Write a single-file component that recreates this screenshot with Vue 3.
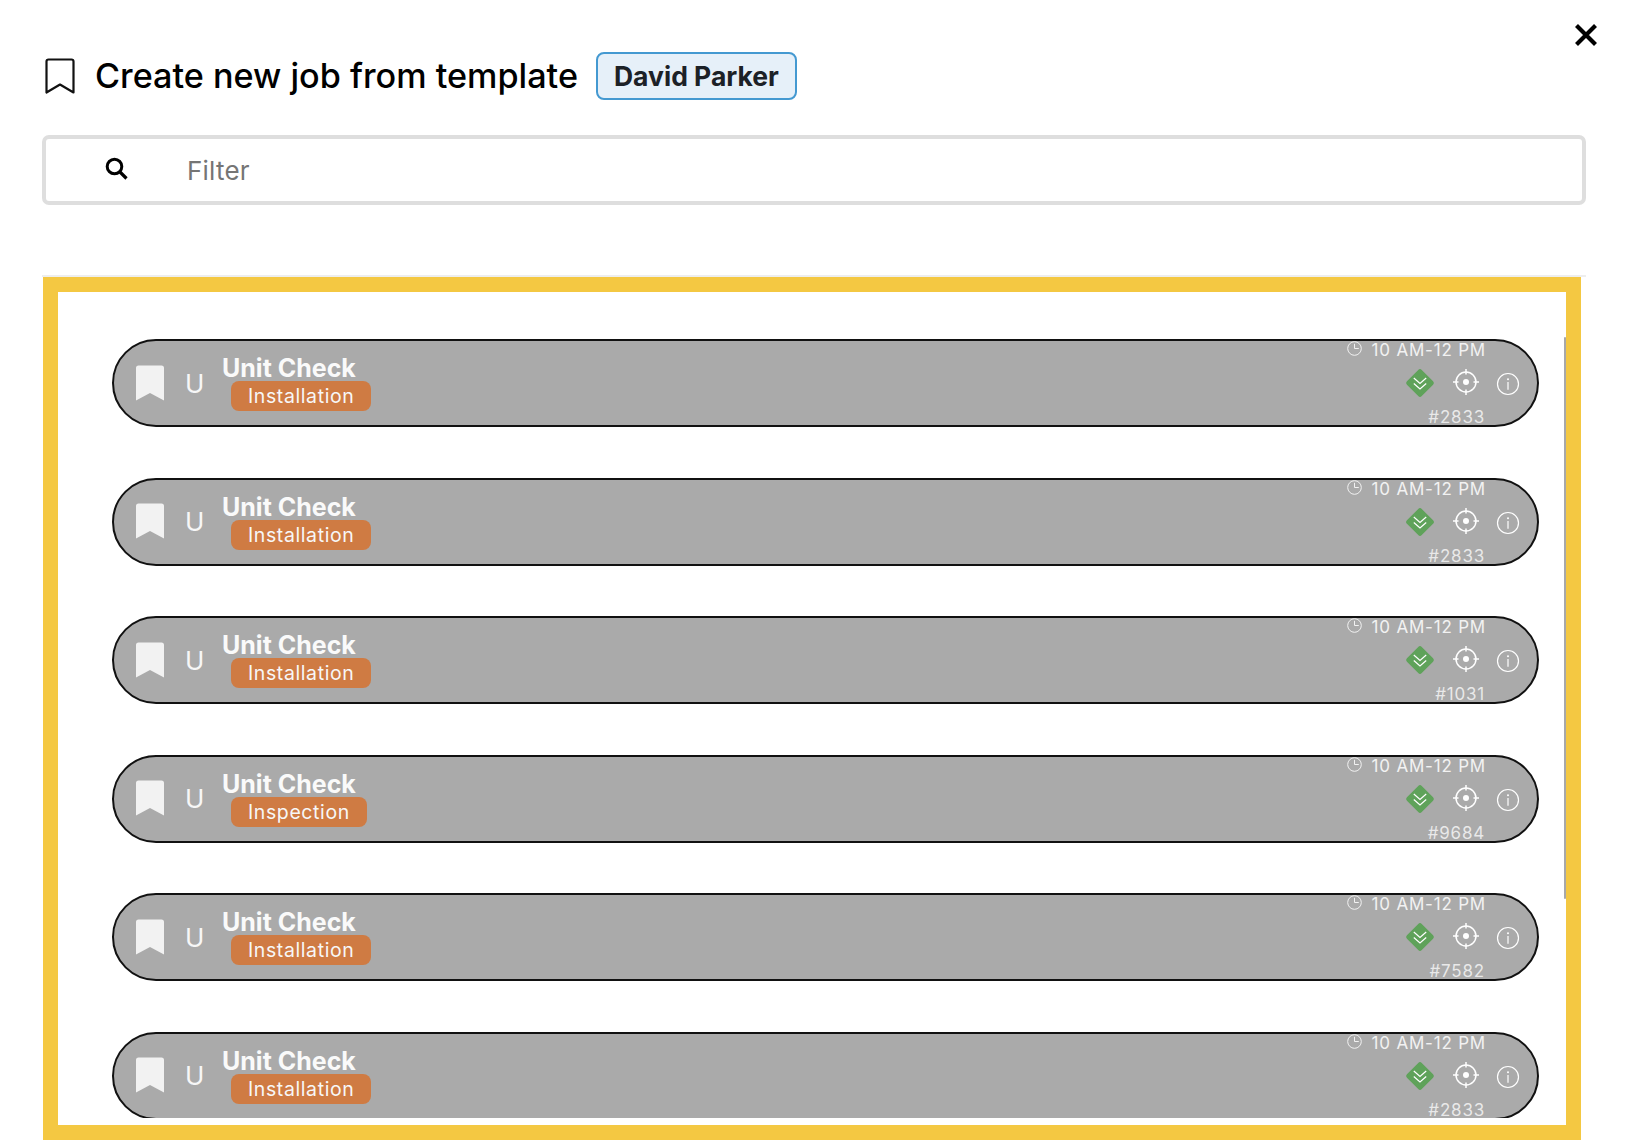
<script setup>
const jobs = [
  { id: 1, type: 'Installation', num: '#2833' },
  { id: 2, type: 'Installation', num: '#2833' },
  { id: 3, type: 'Installation', num: '#1031' },
  { id: 4, type: 'Inspection', num: '#9684' },
  { id: 5, type: 'Installation', num: '#7582' },
  { id: 6, type: 'Installation', num: '#2833' }
]
</script>

<template>
  <div class="page">
    <button class="close" aria-label="Close">
      <svg width="24" height="24" viewBox="0 0 24 24"><path d="M2.500 2.500 21.500 21.500M21.500 2.500 2.500 21.500" stroke="#000" stroke-width="4.200" fill="none" /></svg>
    </button>

    <header class="head">
      <svg class="mark" width="30" height="36" viewBox="0 0 30 36"><path d="M1.500 34.500V3.500Q1.500 1.500 3.500 1.500H26.500Q28.500 1.500 28.500 3.500V34.500L15 26.500Z" fill="none" stroke="#111" stroke-width="2.200" stroke-linejoin="round" /></svg>
      <h1 class="title">Create new job from template</h1>
      <span class="person">David Parker</span>
    </header>

    <div class="search">
      <svg class="glass" width="23" height="23" viewBox="0 0 23 23"><circle cx="9.500" cy="9.500" r="7.300" fill="none" stroke="#000" stroke-width="3" /><path d="M14.500 14.500 21.500 21.500" stroke="#000" stroke-width="3.200" fill="none" /></svg>
      <span class="placeholder">Filter</span>
    </div>

    <div class="rule"></div>

    <section class="panel">
      <div class="thumb"></div>
      <div class="list">
        <article v-for="job in jobs" :key="job.id" class="job">
          <svg class="flag" width="30" height="36" viewBox="0 0 30 36"><path d="M1 35.500V3Q1 .5 3.500 .5H26.500Q29 .5 29 3V35.500L15 28Z" fill="#f2f2f2" /></svg>
          <span class="letter">U</span>
          <div class="info">
            <div class="name">Unit Check</div>
            <span class="tag">{{ job.type }}</span>
          </div>
          <div class="meta">
            <div class="time">
              <svg width="15" height="15" viewBox="0 0 15 15"><circle cx="7.500" cy="7.500" r="6.800" fill="none" stroke="#f2f2f2" stroke-width="1" /><path d="M7.500 2.800V7.500H11.800" fill="none" stroke="#f2f2f2" stroke-width="1" /></svg>
              <span>10 AM-12 PM</span>
            </div>
            <div class="icons">
              <svg width="30" height="30" viewBox="0 0 30 30">
                <rect x="4.500" y="4.500" width="21" height="21" rx="2.500" transform="rotate(45 15 15)" fill="#5fa25a" />
                <path d="M8.800 10 15 15.500 21.200 10M8.800 15.500 15 21 21.200 15.500" fill="none" stroke="#fff" stroke-width="1.200" />
              </svg>
              <svg width="30" height="30" viewBox="0 0 30 30">
                <circle cx="15" cy="14" r="10" fill="none" stroke="#fff" stroke-width="1.500" />
                <circle cx="15" cy="14" r="3" fill="#fff" />
                <path d="M15 1V6.500M15 21.500V27M2 14H7.500M22.500 14H28" stroke="#fff" stroke-width="1.500" fill="none" />
              </svg>
              <svg width="30" height="30" viewBox="0 0 30 30">
                <circle cx="15" cy="16" r="10.500" fill="none" stroke="#fff" stroke-width="1.200" />
                <circle cx="15" cy="11.200" r="1" fill="#fff" />
                <path d="M15 14V21.800" stroke="#fff" stroke-width="1.200" fill="none" />
              </svg>
            </div>
            <div class="num">{{ job.num }}</div>
          </div>
        </article>
      </div>
      <div class="fold"></div>
    </section>
  </div>
</template>

<style scoped>
.page {
  position: relative;
  box-sizing: border-box;
  width: 1626px;
  height: 1146px;
  padding: 52px 40px 0 42px;
  overflow: hidden;
  background: #fff;
  font-family: Inter, "Liberation Sans", sans-serif;
}
.close {
  position: absolute;
  top: 23px;
  left: 1574px;
  width: 24px;
  height: 24px;
  padding: 0;
  border: 0;
  background: none;
}
.close svg { display: block; }
.head {
  display: flex;
  align-items: center;
  height: 48px;
  padding-left: 3px;
}
.mark { margin-right: 20px; }
.title {
  margin: 0 18px 0 0;
  font-size: 34.200px;
  font-weight: 500;
  line-height: 48px;
  color: #000;
  white-space: nowrap;
}
.person {
  box-sizing: border-box;
  height: 48px;
  padding: 0 16px;
  border: 2px solid #4499d1;
  border-radius: 8px;
  background: #e6f0f9;
  color: #1c2127;
  font-size: 26.500px;
  font-weight: 700;
  line-height: 45px;
  white-space: nowrap;
}
.search {
  display: flex;
  align-items: center;
  box-sizing: border-box;
  height: 70px;
  margin-top: 35px;
  padding-left: 59px;
  border: 4px solid #dedede;
  border-radius: 7px;
}
.glass { margin-top: -3px; margin-right: 59px; }
.placeholder {
  font-size: 26px;
  letter-spacing: 0.2px;
  color: #757575;
}
.rule {
  height: 2px;
  margin-top: 70px;
  background: #eeeeee;
}
.panel {
  position: relative;
  box-sizing: border-box;
  height: 863px;
  margin: 0 5px 0 1px;
  border: 15px solid #f4c842;
  background: #fff;
}
.thumb {
  position: absolute;
  top: 45px;
  right: 0;
  width: 2px;
  height: 562px;
  border-radius: 1px;
  background: #a8a8a8;
}
.fold {
  position: absolute;
  left: 0;
  right: 0;
  bottom: 0;
  height: 7px;
  background: #fff;
}
.list {
  display: flex;
  flex-direction: column;
  gap: 50.600px;
  height: 833px;
  padding: 47px 27px 0 54px;
  box-sizing: border-box;
  overflow: hidden;
}
.job {
  flex: none;
  display: flex;
  align-items: center;
  box-sizing: border-box;
  height: 88px;
  padding: 0 2px 0 20.500px;
  border: 2px solid #111;
  border-radius: 44px;
  background: #aaaaaa;
  color: #fff;
}
.flag { margin-top: -1px; }
.letter {
  width: 37px;
  margin-left: 20.500px;
  font-size: 26px;
  color: #f7f7f7;
}
.info {
  display: flex;
  flex-direction: column;
  align-items: flex-start;
}
.name {
  font-size: 25px;
  font-weight: 700;
  line-height: 26px;
  color: #fafafa;
  white-space: nowrap;
}
.tag {
  height: 30px;
  margin: 0 0 0 9px;
  padding: 0 17px;
  border-radius: 8px;
  background: #cf7b43;
  font-size: 19.500px;
  line-height: 30px;
  letter-spacing: 0.600px;
  color: #f7f7f7;
  white-space: nowrap;
}
.meta {
  display: flex;
  flex-direction: column;
  align-items: flex-end;
  align-self: stretch;
  margin-left: auto;
}
.time {
  display: flex;
  align-items: center;
  gap: 10px;
  height: 20px;
  margin: -1px 49px 0 0;
  font-size: 17px;
  letter-spacing: 0.800px;
  color: #f2f2f2;
  white-space: nowrap;
}
.time svg { margin-top: -3px; }
.icons {
  display: flex;
  align-items: center;
  gap: 16px;
  height: 30px;
  margin: 8px 12px 0 0;
}
.icons svg:nth-child(2) { margin-right: -4px; }
.num {
  height: 14px;
  margin: 12px 50px 0 0;
  font-size: 17px;
  line-height: 14px;
  letter-spacing: 0.800px;
  color: rgba(255, 255, 255, 0.75);
}
</style>
